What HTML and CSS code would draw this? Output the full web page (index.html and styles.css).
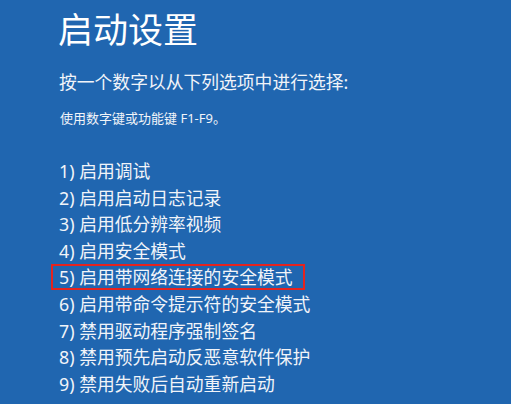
FILE: index.html
```html
<!DOCTYPE html>
<html lang="zh-CN">
<head>
<meta charset="utf-8">
<title>启动设置</title>
<link rel="stylesheet" href="styles.css">
</head>
<body>
<main class="screen">
  <h1 class="title">启动设置</h1>
  <p class="prompt">按一个数字以从下列选项中进行选择:</p>
  <p class="hint">使用数字键或功能键 F1-F9。</p>
  <ol class="options">
    <li>1) 启用调试</li>
    <li>2) 启用启动日志记录</li>
    <li>3) 启用低分辨率视频</li>
    <li>4) 启用安全模式</li>
    <li class="selected">5) 启用带网络连接的安全模式</li>
    <li>6) 启用带命令提示符的安全模式</li>
    <li>7) 禁用驱动程序强制签名</li>
    <li>8) 禁用预先启动反恶意软件保护</li>
    <li>9) 禁用失败后自动重新启动</li>
  </ol>
</main>
</body>
</html>
```

FILE: styles.css
```css
html, body {
  margin: 0;
  padding: 0;
  width: 511px;
  height: 404px;
  overflow: hidden;
  background: #2066b0;
}

.screen {
  padding: 0 0 0 59px;
  color: #f1f4f9;
  font-family: "Noto Sans", "Noto Sans CJK SC", sans-serif;
}

.title {
  margin: 10px 0 0 -1px;
  font-size: 35px;
  font-weight: 400;
  line-height: 40px;
  color: #ffffff;
}

.prompt {
  margin: 20px 0 0 0;
  font-size: 17.8px;
  line-height: 24px;
}

.hint {
  margin: 15px 0 0 1px;
  font-size: 13px;
  line-height: 18px;
}

.options {
  list-style: none;
  margin: 31px 0 0 0;
  padding: 0;
  font-size: 17.8px;
  line-height: 26.6px;
}

.options li {
  white-space: nowrap;
}

.selected {
  position: relative;
}

.selected::after {
  content: "";
  position: absolute;
  left: -8px;
  top: 0;
  width: 254px;
  height: 26px;
  box-sizing: border-box;
  border: 2px solid #e5231f;
}
```
